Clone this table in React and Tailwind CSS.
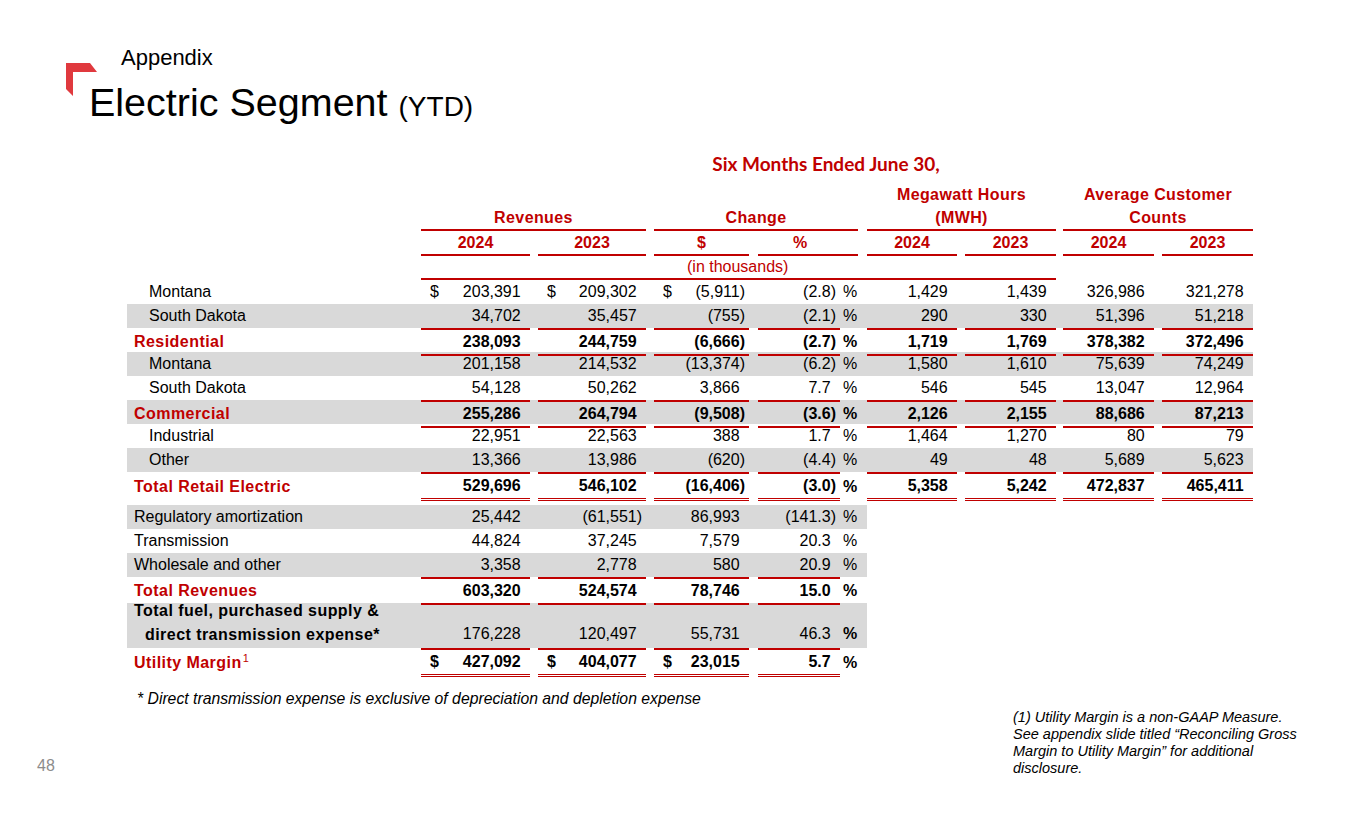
const RED = "text-[#c00000]";
const COLS = "grid w-fit grid-cols-[294px_109px_116px_103px_91px_27px_90px_99px_98px_99px]";
const COLS_SHORT = "grid w-fit grid-cols-[294px_109px_116px_103px_91px_27px]";
const GAP = ["", "pl-[8px]", "pl-[8px]", "pl-[9px]", "", "pl-[8px]", "pl-[7px]", "pl-[8px]"];

const upperRows = [
  { label: "Montana", indent: true, dollar: true, vals: ["203,391", "209,302", "(5,911)", "(2.8)", "1,429", "1,439", "326,986", "321,278"] },
  { label: "South Dakota", indent: true, gray: true, vals: ["34,702", "35,457", "(755)", "(2.1)", "290", "330", "51,396", "51,218"] },
  { label: "Residential", total: true, line: "sub", vals: ["238,093", "244,759", "(6,666)", "(2.7)", "1,719", "1,769", "378,382", "372,496"] },
  { label: "Montana", indent: true, gray: true, vals: ["201,158", "214,532", "(13,374)", "(6.2)", "1,580", "1,610", "75,639", "74,249"] },
  { label: "South Dakota", indent: true, vals: ["54,128", "50,262", "3,866", "7.7", "546", "545", "13,047", "12,964"] },
  { label: "Commercial", total: true, gray: true, line: "sub", vals: ["255,286", "264,794", "(9,508)", "(3.6)", "2,126", "2,155", "88,686", "87,213"] },
  { label: "Industrial", indent: true, vals: ["22,951", "22,563", "388", "1.7", "1,464", "1,270", "80", "79"] },
  { label: "Other", indent: true, gray: true, vals: ["13,366", "13,986", "(620)", "(4.4)", "49", "48", "5,689", "5,623"] },
  { label: "Total Retail Electric", total: true, line: "total", tall: true, vals: ["529,696", "546,102", "(16,406)", "(3.0)", "5,358", "5,242", "472,837", "465,411"] },
];

const lowerRows = [
  { label: "Regulatory amortization", gray: true, vals: ["25,442", "(61,551)", "86,993", "(141.3)"] },
  { label: "Transmission", vals: ["44,824", "37,245", "7,579", "20.3"] },
  { label: "Wholesale and other", gray: true, vals: ["3,358", "2,778", "580", "20.9"] },
  { label: "Total Revenues", total: true, line: "sub", tall: true, vals: ["603,320", "524,574", "78,746", "15.0"] },
];

function Paren({ v }) {
  if (v.endsWith(")")) return <span>{v}</span>;
  return (
    <span>
      {v}
      <span className="invisible">)</span>
    </span>
  );
}

function Lines({ line, children }) {
  if (line === "sub") {
    return <div className="h-full border-y-2 border-[#c00000]">{children}</div>;
  }
  if (line === "total") {
    return (
      <div className="h-full border-b-[3px] border-double border-[#c00000]">
        <div className="h-full border-t-2 border-[#c00000]">{children}</div>
      </div>
    );
  }
  return <div className="h-full">{children}</div>;
}

function NumCell({ v, gap, bold, dollar, line, bottom }) {
  return (
    <div className={`h-full ${gap}`}>
      <Lines line={line}>
        <div
          className={`flex h-full justify-between pr-[4px] ${bottom ? "items-end pb-[2px]" : "items-center"} ${bold ? "font-bold" : ""}`}
        >
          <span className="pl-[9px]">{dollar ? "$" : ""}</span>
          <Paren v={v} />
        </div>
      </Lines>
    </div>
  );
}

function PctCell({ bold, bottom }) {
  return (
    <div
      className={`flex h-full pl-[3px] ${bottom ? "items-end pb-[2px]" : "items-center"} ${bold ? "font-bold" : ""}`}
    >
      %
    </div>
  );
}

function Label({ row }) {
  return (
    <div
      className={`flex h-full items-center ${row.indent ? "pl-[22px]" : "pl-[7px]"} ${
        row.total ? `font-bold tracking-[0.45px] ${RED}` : ""
      }`}
    >
      {row.label}
    </div>
  );
}

function UpperRow({ row }) {
  const h = row.tall ? "h-[26px]" : "h-[24px]";
  return (
    <div className={`${COLS} ${h} ${row.gray ? "bg-[#d9d9d9]" : ""}`}>
      <Label row={row} />
      {row.vals.slice(0, 4).map((v, i) => (
        <NumCell key={i} v={v} gap={GAP[i]} bold={row.total} line={row.line} dollar={row.dollar && i < 3} />
      ))}
      <PctCell bold={row.total} />
      {row.vals.slice(4).map((v, i) => (
        <NumCell key={i + 4} v={v} gap={GAP[i + 4]} bold={row.total} line={row.line} />
      ))}
    </div>
  );
}

function LowerRow({ row }) {
  const h = row.tall ? "h-[26px]" : "h-[24px]";
  return (
    <div className={`${COLS_SHORT} ${h} ${row.gray ? "bg-[#d9d9d9]" : ""}`}>
      <Label row={row} />
      {row.vals.map((v, i) => (
        <NumCell key={i} v={v} gap={GAP[i]} bold={row.total} line={row.line} />
      ))}
      <PctCell bold={row.total} />
    </div>
  );
}

function Logo() {
  return (
    <svg width="32" height="34" viewBox="0 0 32 34">
      <polygon points="0,0 24,0 31,9 7,9 7,33 0,26" fill="#e0393e" />
    </svg>
  );
}

export default function App() {
  const years = ["2024", "2023"];
  return (
    <div className="relative h-[829px] w-[1365px] overflow-hidden bg-white font-['Liberation_Sans',Arial,sans-serif] text-black">
      {/* title */}
      <div className="absolute left-[66px] top-[63px]">
        <Logo />
      </div>
      <div className="pt-[47px]">
        <div className="h-[22px] pl-[121px] text-[22px] leading-none">Appendix</div>
        <div className="mt-[14px] h-[40px] whitespace-nowrap pl-[89px] text-[39.5px] leading-none">
          Electric Segment <span className="text-[28px]">(YTD)</span>
        </div>
      </div>

      {/* table */}
      <div className="pl-[127px] text-[16px] leading-[24px]">
        <div className={`mt-[31px] ml-[294px] w-[810px] text-center font-['Lato',sans-serif] text-[19px] font-bold leading-[20px] ${RED}`}>
          Six Months Ended June 30,
        </div>

        <div className={`${COLS} mt-[9px] h-[48px] font-bold tracking-[0.4px] leading-[23px] ${RED}`}>
          <div />
          <div className="col-span-2 flex items-end justify-center border-b-2 border-[#c00000]">Revenues</div>
          <div className="col-span-3 pl-[8px] pr-[9px]">
            <div className="flex h-full items-end justify-center border-b-2 border-[#c00000]">Change</div>
          </div>
          <div className="col-span-2 flex items-end justify-center border-b-2 border-[#c00000] text-center">
            Megawatt Hours
            <br />
            (MWH)
          </div>
          <div className="col-span-2 pl-[7px]">
            <div className="flex h-full items-end justify-center border-b-2 border-[#c00000] text-center">
              Average Customer
              <br />
              Counts
            </div>
          </div>
        </div>

        <div className={`${COLS} h-[25px] font-bold leading-[23px] ${RED}`}>
          <div />
          {years.map((y, i) => (
            <div key={"r" + y} className={`h-full ${GAP[i]}`}>
              <div className="h-full border-b-2 border-[#c00000] text-center">{y}</div>
            </div>
          ))}
          <div className="h-full pl-[8px]">
            <div className="h-full border-b-2 border-[#c00000] text-center">$</div>
          </div>
          <div className="col-span-2 h-full pl-[9px] pr-[9px]">
            <div className="h-full border-b-2 border-[#c00000] pr-[16px] text-center">%</div>
          </div>
          {years.map((y, i) => (
            <div key={"m" + y} className={`h-full ${GAP[i + 4]}`}>
              <div className="h-full border-b-2 border-[#c00000] text-center">{y}</div>
            </div>
          ))}
          {years.map((y, i) => (
            <div key={"c" + y} className={`h-full ${GAP[i + 6]}`}>
              <div className="h-full border-b-2 border-[#c00000] text-center">{y}</div>
            </div>
          ))}
        </div>

        <div className={`${COLS} h-[24px]`}>
          <div />
          <div className={`col-span-7 border-b-2 border-[#c00000] pl-[266px] leading-[22px] ${RED}`}>
            (in thousands)
          </div>
        </div>

        {upperRows.map((row, i) => (
          <UpperRow key={i} row={row} />
        ))}

        <div className="mt-[7px]">
          {lowerRows.map((row, i) => (
            <LowerRow key={i} row={row} />
          ))}

          <div className={`${COLS_SHORT} h-[45px] bg-[#d9d9d9]`}>
            <div className="flex h-full flex-col gap-[8px] pl-[7px] font-bold leading-[16px] tracking-[0.45px]">
              <div>Total fuel, purchased supply &amp;</div>
              <div className="pl-[11px]">direct transmission expense*</div>
            </div>
            {["176,228", "120,497", "55,731", "46.3"].map((v, i) => (
              <NumCell key={i} v={v} gap={GAP[i]} bottom />
            ))}
            <PctCell bold bottom />
          </div>

          <div className={`${COLS_SHORT} h-[26px]`}>
            <div className={`flex h-full items-center pl-[7px] font-bold tracking-[0.45px] ${RED}`}>
              Utility Margin
              <span className="ml-[1px] -mt-[8px] text-[11px] font-normal leading-none">1</span>
            </div>
            {["427,092", "404,077", "23,015", "5.7"].map((v, i) => (
              <NumCell key={i} v={v} gap={GAP[i]} bold line="total" dollar={i < 3} />
            ))}
            <PctCell bold />
          </div>
        </div>

        <div className="mt-[16px] pl-[10px] text-[15.75px] italic leading-[18px]">
          * Direct transmission expense is exclusive of depreciation and depletion expense
        </div>
      </div>

      {/* bottom row */}
      <div className="mt-[1px] flex">
        <div className="w-[1013px] pl-[37px] pt-[47px] text-[16px] leading-[20px] text-[#8c8c8c]">48</div>
        <div className="whitespace-nowrap text-[14.5px] italic leading-[17px]">
          (1) Utility Margin is a non-GAAP Measure.
          <br />
          See appendix slide titled “Reconciling Gross
          <br />
          Margin to Utility Margin” for additional
          <br />
          disclosure.
        </div>
      </div>
    </div>
  );
}
